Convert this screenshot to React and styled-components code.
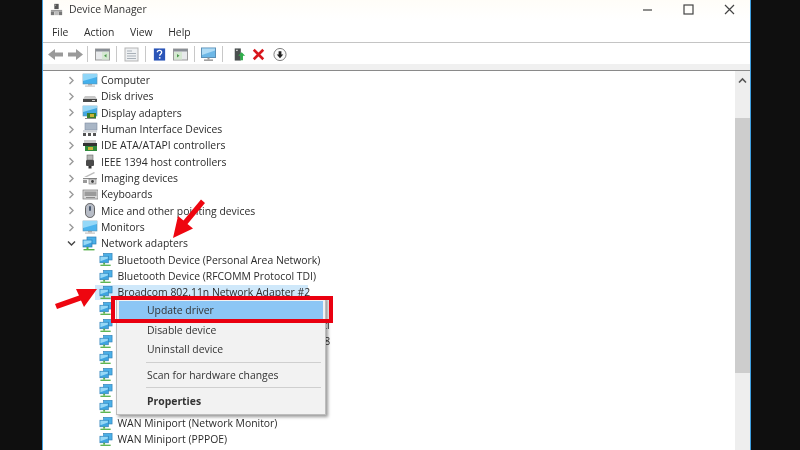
import React from "react";
import styled, { createGlobalStyle } from "styled-components";

const Global = createGlobalStyle`
  html, body { margin: 0; padding: 0; background: #0f0f0f; overflow: hidden; }
  #root { width: 800px; height: 450px; }
`;

const Stage = styled.div`
  position: relative;
  width: 800px;
  height: 450px;
  overflow: hidden;
  display: flex;
  background: #0f0f0f;
  font-family: "Open Sans", "Noto Sans", sans-serif;
  font-size: 10.4px;
  color: #2b2b2b;
  filter: blur(0.55px);
`;

const Win = styled.div`
  margin-left: 42px;
  width: 709px;
  height: 450px;
  box-sizing: border-box;
  background: #fff;
  border-left: 1.5px solid #3f9fe0;
  border-right: 1.5px solid #3f9fe0;
  display: flex;
  flex-direction: column;
`;

const TitleBar = styled.div`
  height: 21px;
  flex: none;
  display: flex;
  align-items: center;
  padding: 0 0 3px 7px;
  box-sizing: border-box;
  background: linear-gradient(#fffdf8, #fff);
  gap: 6px;
`;
const TitleText = styled.span`
  font-size: 10.4px;
  color: #333;
`;
const WinButtons = styled.div`
  margin-left: auto;
  display: flex;
  align-items: center;
`;
const WinButton = styled.svg`
  width: 41px;
  height: 14px;
  stroke: #444;
  fill: none;
  stroke-width: 1.2;
  display: block;
`;

const MenuBar = styled.div`
  height: 22px;
  flex: none;
  display: flex;
  align-items: center;
  padding-left: 9px;
  gap: 15.5px;
  border-bottom: 1px solid #c4c4c4;
  box-sizing: border-box;
`;
const MenuLabel = styled.span`
  color: #2e2e2e;
`;

const ToolBar = styled.div`
  height: 21px;
  flex: none;
  display: flex;
  align-items: center;
  padding: 1px 0 0 5px;
  box-sizing: border-box;
  background: #fff;
`;
const ToolSep = styled.div`
  width: 1px;
  height: 16px;
  background: #c8c8c8;
  flex: none;
  margin: 0 ${(p) => p.$r ?? 7}px 0 ${(p) => p.$l ?? 6}px;
`;
const ToolIcon = styled.svg`
  width: ${(p) => p.$w || 15}px;
  height: 15px;
  margin-right: ${(p) => p.$mr || 0}px;
  flex: none;
  display: block;
`;

const ToolFoot = styled.div`
  height: 6px;
  flex: none;
  background: #f0f0f0;
  border-bottom: 1.5px solid #8a8a8a;
`;

const Body = styled.div`
  flex: 1;
  min-height: 0;
  display: flex;
`;
const Tree = styled.div`
  flex: 1;
  min-width: 0;
  overflow: hidden;
  padding-top: 1px;
`;
const Row = styled.div`
  height: 16.33px;
  display: flex;
  align-items: center;
  white-space: nowrap;
  padding-left: ${(p) => (p.$child ? 56 : 24)}px;
`;
const Chevron = styled.svg`
  width: 9px;
  height: 9px;
  flex: none;
  margin-right: 6px;
  fill: none;
  stroke: ${(p) => (p.$open ? "#444" : "#9a9a9a")};
  stroke-width: 1.4;
`;
const TreeIcon = styled.svg`
  width: 16px;
  height: 15px;
  flex: none;
  margin-right: 3px;
  display: block;
`;
const ChildIcon = styled(TreeIcon)`
  margin-right: 4.5px;
  width: 14px;
`;
const Selected = styled.span`
  display: flex;
  align-items: center;
  height: 15px;
  background: #cfe8fa;
  margin-left: -4px;
  padding: 0 3px 0 4px;
  width: 213px;
  box-sizing: border-box;
`;
const Label = styled.span``;

const Scroll = styled.div`
  width: 15px;
  flex: none;
  background: #eeeeee;
  display: flex;
  flex-direction: column;
  align-items: center;
`;
const ScrollUp = styled.svg`
  width: 9px;
  height: 7px;
  margin: 6px 0 34px;
  fill: none;
  stroke: #555;
  stroke-width: 1.6;
`;
const Thumb = styled.div`
  width: 15px;
  height: 255px;
  background: #cdcdcd;
`;

const Menu = styled.div`
  position: absolute;
  left: 116px;
  top: 296.5px;
  width: 210px;
  height: 118px;
  box-sizing: border-box;
  padding: 3px 2px;
  background: #f2f2f2;
  border: 1px solid #bdbdbd;
  box-shadow: 2px 2px 3px rgba(0, 0, 0, 0.4);
  display: flex;
  flex-direction: column;
`;
const MenuItem = styled.div`
  flex: none;
  height: 19.6px;
  display: flex;
  align-items: center;
  padding-left: 28px;
  color: #333;
  font-weight: ${(p) => (p.$bold ? 700 : 400)};
  background: ${(p) => (p.$active ? "#8cc6f5" : "transparent")};
`;
const MenuSep = styled.div`
  flex: none;
  height: 1px;
  margin: 2.5px 2px 2.5px 27px;
  background: #cfcfcf;
`;
const RedBox = styled.div`
  position: absolute;
  left: 111px;
  top: 296px;
  width: 222px;
  height: 27px;
  box-sizing: border-box;
  border: 4px solid #ea0010;
`;
const Arrow = styled.svg`
  position: absolute;
  left: ${(p) => p.$x}px;
  top: ${(p) => p.$y}px;
  width: ${(p) => p.$w}px;
  height: ${(p) => p.$h}px;
  fill: #ee0610;
`;

const I = {
  computer: (
    <>
      <rect x="1" y="1" width="14" height="10" fill="#43b0ec" stroke="#5a8fb0" strokeWidth=".6" />
      <path d="M1 1h14v3L1 8z" fill="#8fd6f8" />
      <rect x="6" y="11" width="4" height="1.5" fill="#aaa" />
      <rect x="3" y="12.5" width="10" height="1.2" fill="#c2c2c2" />
    </>
  ),
  disk: (
    <>
      <path d="M3 7h10l2 3v3H1v-3z" fill="#c8c8c8" />
      <rect x="1" y="10" width="14" height="3" fill="#4a4a4a" />
      <rect x="10" y="11" width="3" height="1" fill="#ddd" />
    </>
  ),
  display: (
    <>
      <rect x="1" y="1" width="14" height="10" fill="#43a8e2" stroke="#5a8fb0" strokeWidth=".6" />
      <path d="M1 1h14v2L1 7z" fill="#9ad8f6" />
      <rect x="5" y="8" width="9" height="5" fill="#3a7d2c" />
      <rect x="8" y="9" width="4" height="3" fill="#c9b23a" />
      <rect x="3" y="13" width="11" height="1" fill="#8a8a8a" />
    </>
  ),
  hid: (
    <>
      <rect x="3" y="1" width="12" height="7" fill="#a9b6c6" stroke="#7f8da0" strokeWidth=".6" />
      <rect x="1" y="8" width="14" height="2.5" fill="#cfd3d8" />
      <path d="M1 14v-3h3v3zM6 14v-3h3v3zM11 14v-3h3v3z" fill="#555" />
    </>
  ),
  ide: (
    <>
      <rect x="2" y="2" width="12" height="3" fill="#c8c8c8" />
      <rect x="1" y="5" width="14" height="3" fill="#333" />
      <rect x="3" y="8" width="12" height="5" fill="#2f8a3a" />
      <rect x="6" y="9" width="5" height="3" fill="#c8b23a" />
    </>
  ),
  ieee: (
    <>
      <rect x="5" y="1" width="6" height="5" fill="#b5b5b5" stroke="#666" strokeWidth=".6" />
      <rect x="4" y="6" width="8" height="6" rx="1" fill="#4a4a4a" />
      <rect x="6.5" y="12" width="3" height="2.5" fill="#333" />
    </>
  ),
  imaging: (
    <>
      <path d="M2 6L12 1l1 1L5 6z" fill="#bbb" />
      <rect x="1" y="7" width="14" height="1.2" fill="#888" />
      <rect x="1" y="9" width="4" height="3" fill="#9a9a9a" />
      <rect x="7" y="8" width="7" height="5" fill="#d5d5d5" stroke="#666" strokeWidth=".5" />
      <circle cx="10.5" cy="10.5" r="1.4" fill="#444" />
    </>
  ),
  keyboard: (
    <>
      <rect x="1" y="3" width="15" height="9" fill="#d8d8d8" stroke="#777" strokeWidth=".7" />
      <rect x="2.5" y="4.5" width="12" height="4.5" fill="#9b9b9b" />
      <rect x="4" y="10" width="9" height="1" fill="#8b8b8b" />
    </>
  ),
  mouse: (
    <>
      <rect x="3.5" y="0.5" width="9" height="14" rx="4.3" fill="#b7bcc6" stroke="#555" strokeWidth=".9" />
      <rect x="7" y="3" width="2" height="5" rx="1" fill="#4a5a70" />
    </>
  ),
  monitor: (
    <>
      <rect x="1" y="1" width="14" height="10" fill="#4cb4ee" stroke="#5a8fb0" strokeWidth=".6" />
      <path d="M1 1h14v3L1 8z" fill="#95d8f8" />
      <rect x="6" y="11" width="4" height="1.5" fill="#aaa" />
      <rect x="3" y="12.5" width="10" height="1.2" fill="#c2c2c2" />
    </>
  ),
  net: (
    <>
      <rect x="5" y="1" width="9" height="7" fill="#4bb0e8" stroke="#2f7fb5" strokeWidth=".7" />
      <rect x="1" y="4" width="9" height="7" fill="#3ea4e0" stroke="#2f7fb5" strokeWidth=".7" />
      <path d="M1.500 4.500h8v2l-8 3z" fill="#96d8f6" />
      <rect x="4.500" y="11" width="2" height="2" fill="#56b04a" />
      <rect x="1.500" y="13" width="11" height="1.400" fill="#56b04a" />
    </>
  ),
};

const TopRows = [
  ["computer", "Computer"],
  ["disk", "Disk drives"],
  ["display", "Display adapters"],
  ["hid", "Human Interface Devices"],
  ["ide", "IDE ATA/ATAPI controllers"],
  ["ieee", "IEEE 1394 host controllers"],
  ["imaging", "Imaging devices"],
  ["keyboard", "Keyboards"],
  ["mouse", "Mice and other pointing devices"],
  ["monitor", "Monitors"],
];

const Hidden = [
  "Intel(R) PRO/1000 MT Network Connection",
  "Microsoft Hosted Network Virtual Adapter tl",
  "Microsoft Wi-Fi Direct Virtual Adapter #1118",
  "WAN Miniport (IKEv2)",
  "WAN Miniport (IP)",
  "WAN Miniport (IPv6)",
  "WAN Miniport (L2TP)",
];

const Child = ({ children }) => (
  <Row $child>
    <ChildIcon viewBox="0 0 15 15">{I.net}</ChildIcon>
    <Label>{children}</Label>
  </Row>
);

export default function App() {
  return (
    <>
      <Global />
      <Stage>
        <Win>
          <TitleBar>
            <ToolIcon viewBox="0 0 15 15" $w={13}>
              <rect x="5" y="1" width="5" height="6" fill="#555" />
              <rect x="6" y="2" width="1" height="1" fill="#ddd" />
              <rect x="1" y="8" width="13" height="2" fill="#9a9a9a" />
              <rect x="1" y="10" width="4" height="4" fill="#777" />
              <rect x="5.500" y="10" width="4" height="4" fill="#bbb" />
              <rect x="10" y="10" width="4" height="4" fill="#777" />
            </ToolIcon>
            <TitleText>Device Manager</TitleText>
            <WinButtons>
              <WinButton viewBox="0 0 41 14"><path d="M16 8h9" /></WinButton>
              <WinButton viewBox="0 0 41 14"><rect x="16" y="3" width="9" height="9" /></WinButton>
              <WinButton viewBox="0 0 41 14"><path d="M16 3l9 9M25 3l-9 9" /></WinButton>
            </WinButtons>
          </TitleBar>
          <MenuBar>
            <MenuLabel>File</MenuLabel>
            <MenuLabel>Action</MenuLabel>
            <MenuLabel>View</MenuLabel>
            <MenuLabel>Help</MenuLabel>
          </MenuBar>
          <ToolBar>
            <ToolIcon viewBox="0 0 15 15" $mr={5}>
              <path d="M0 7.500L7 2v3.500h8v4H7V13z" fill="#9a9a9a" />
            </ToolIcon>
            <ToolIcon viewBox="0 0 15 15">
              <path d="M15 7.500L8 2v3.500H0v4h8V13z" fill="#9a9a9a" />
            </ToolIcon>
            <ToolSep $l={4} />
            <ToolIcon viewBox="0 0 15 15">
              <rect x=".5" y="2" width="14" height="11" fill="#e8eaec" stroke="#9a9a9a" />
              <rect x=".5" y="2" width="14" height="2.500" fill="#8a8f96" />
              <rect x="7" y="5" width="7" height="7.500" fill="#d5e8d2" />
              <path d="M11.500 7v3.500l-2.500-1.700z" fill="#4a9a4a" />
            </ToolIcon>
            <ToolSep />
            <ToolIcon viewBox="0 0 15 15">
              <rect x="1" y="1" width="13" height="13" fill="#eef0f2" stroke="#b5b5b5" />
              <path d="M3 4h5M3 6.500h9M3 9h9M3 11.500h9" stroke="#a8b0b8" strokeWidth="1" />
            </ToolIcon>
            <ToolSep />
            <ToolIcon viewBox="0 0 15 15" $w={13} $mr={7}>
              <rect x="1" y="0.500" width="13" height="14" fill="#2b55b8" />
              <path d="M5 5c0-3 5-3 5 0 0 2-2.300 2-2.300 4" fill="none" stroke="#fff" strokeWidth="1.500" />
              <rect x="6.800" y="10.500" width="1.800" height="1.800" fill="#fff" />
            </ToolIcon>
            <ToolIcon viewBox="0 0 15 15">
              <rect x=".5" y="2" width="14" height="11" fill="#e8eaec" stroke="#9a9a9a" />
              <rect x=".5" y="2" width="14" height="2.500" fill="#8a8f96" />
              <rect x="1" y="5" width="8" height="7.500" fill="#d5e8d2" />
              <path d="M4 7v3.500l2.500-1.700z" fill="#4a9a4a" />
            </ToolIcon>
            <ToolSep $r={6} />
            <ToolIcon viewBox="0 0 15 15">
              <rect x=".5" y="1" width="14" height="9.500" fill="#6db7e6" stroke="#5b8fb5" />
              <path d="M1 1.500h13v2L1 8z" fill="#b0dcf5" />
              <rect x="6.500" y="10.500" width="2" height="2" fill="#999" />
              <rect x="3" y="12.500" width="9" height="1.300" fill="#8a8a8a" />
            </ToolIcon>
            <ToolSep $r={10} />
            <ToolIcon viewBox="0 0 15 15" $w={13} $mr={6}>
              <rect x="2" y="0.500" width="7" height="14" fill="#4a4f4f" />
              <rect x="3.500" y="2" width="2" height="1.500" fill="#ccc" />
              <path d="M10 5l4 4h-2.500v5h-3V9H6z" fill="#2fae4a" />
            </ToolIcon>
            <ToolIcon viewBox="0 0 15 15" $w={13} $mr={8}>
              <path d="M2 2l11 11M13 2L2 13" stroke="#d8161c" strokeWidth="3" />
            </ToolIcon>
            <ToolIcon viewBox="0 0 15 15" $w={14}>
              <circle cx="7.500" cy="7.500" r="6.500" fill="#fafafa" stroke="#777" />
              <path d="M7.500 11.500L4 7.500h2V4h3v3.500h2z" fill="#222" />
            </ToolIcon>
          </ToolBar>
          <ToolFoot />
          <Body>
            <Tree>
              {TopRows.map(([k, t]) => (
                <Row key={t}>
                  <Chevron viewBox="0 0 9 9"><path d="M2.500 1l3.500 3.500L2.500 8" /></Chevron>
                  <TreeIcon viewBox="0 0 16 15">{I[k]}</TreeIcon>
                  <Label>{t}</Label>
                </Row>
              ))}
              <Row>
                <Chevron $open viewBox="0 0 9 9"><path d="M1 2.500l3.500 3.500L8 2.500" /></Chevron>
                <TreeIcon viewBox="0 0 16 15">{I.net}</TreeIcon>
                <Label>Network adapters</Label>
              </Row>
              <Child>Bluetooth Device (Personal Area Network)</Child>
              <Child>Bluetooth Device (RFCOMM Protocol TDI)</Child>
              <Row $child>
                <Selected>
                  <ChildIcon viewBox="0 0 15 15">{I.net}</ChildIcon>
                  <Label>Broadcom 802.11n Network Adapter #2</Label>
                </Selected>
              </Row>
              {Hidden.map((t) => (
                <Child key={t}>{t}</Child>
              ))}
              <Child>WAN Miniport (Network Monitor)</Child>
              <Child>WAN Miniport (PPPOE)</Child>
            </Tree>
            <Scroll>
              <ScrollUp viewBox="0 0 9 7"><path d="M1 5.500l3.500-3.500L8 5.500" /></ScrollUp>
              <Thumb />
            </Scroll>
          </Body>
        </Win>
        <Menu>
          <MenuItem $active>Update driver</MenuItem>
          <MenuItem>Disable device</MenuItem>
          <MenuItem>Uninstall device</MenuItem>
          <MenuSep />
          <MenuItem>Scan for hardware changes</MenuItem>
          <MenuSep />
          <MenuItem $bold>Properties</MenuItem>
        </Menu>
        <RedBox />
        <Arrow $x={170} $y={196} $w={38} $h={46} viewBox="0 0 38 46">
          <path d="M3 42L8 20l5.500 4.500L31 3.500l4 3.500-17.500 21 5.500 4.500z" />
        </Arrow>
        <Arrow $x={52} $y={286} $w={48} $h={25} viewBox="0 0 48 25">
          <path d="M45 3L32 21l-3-6.500L5 23l-2-5 24-8.500L24 3z" />
        </Arrow>
      </Stage>
    </>
  );
}
